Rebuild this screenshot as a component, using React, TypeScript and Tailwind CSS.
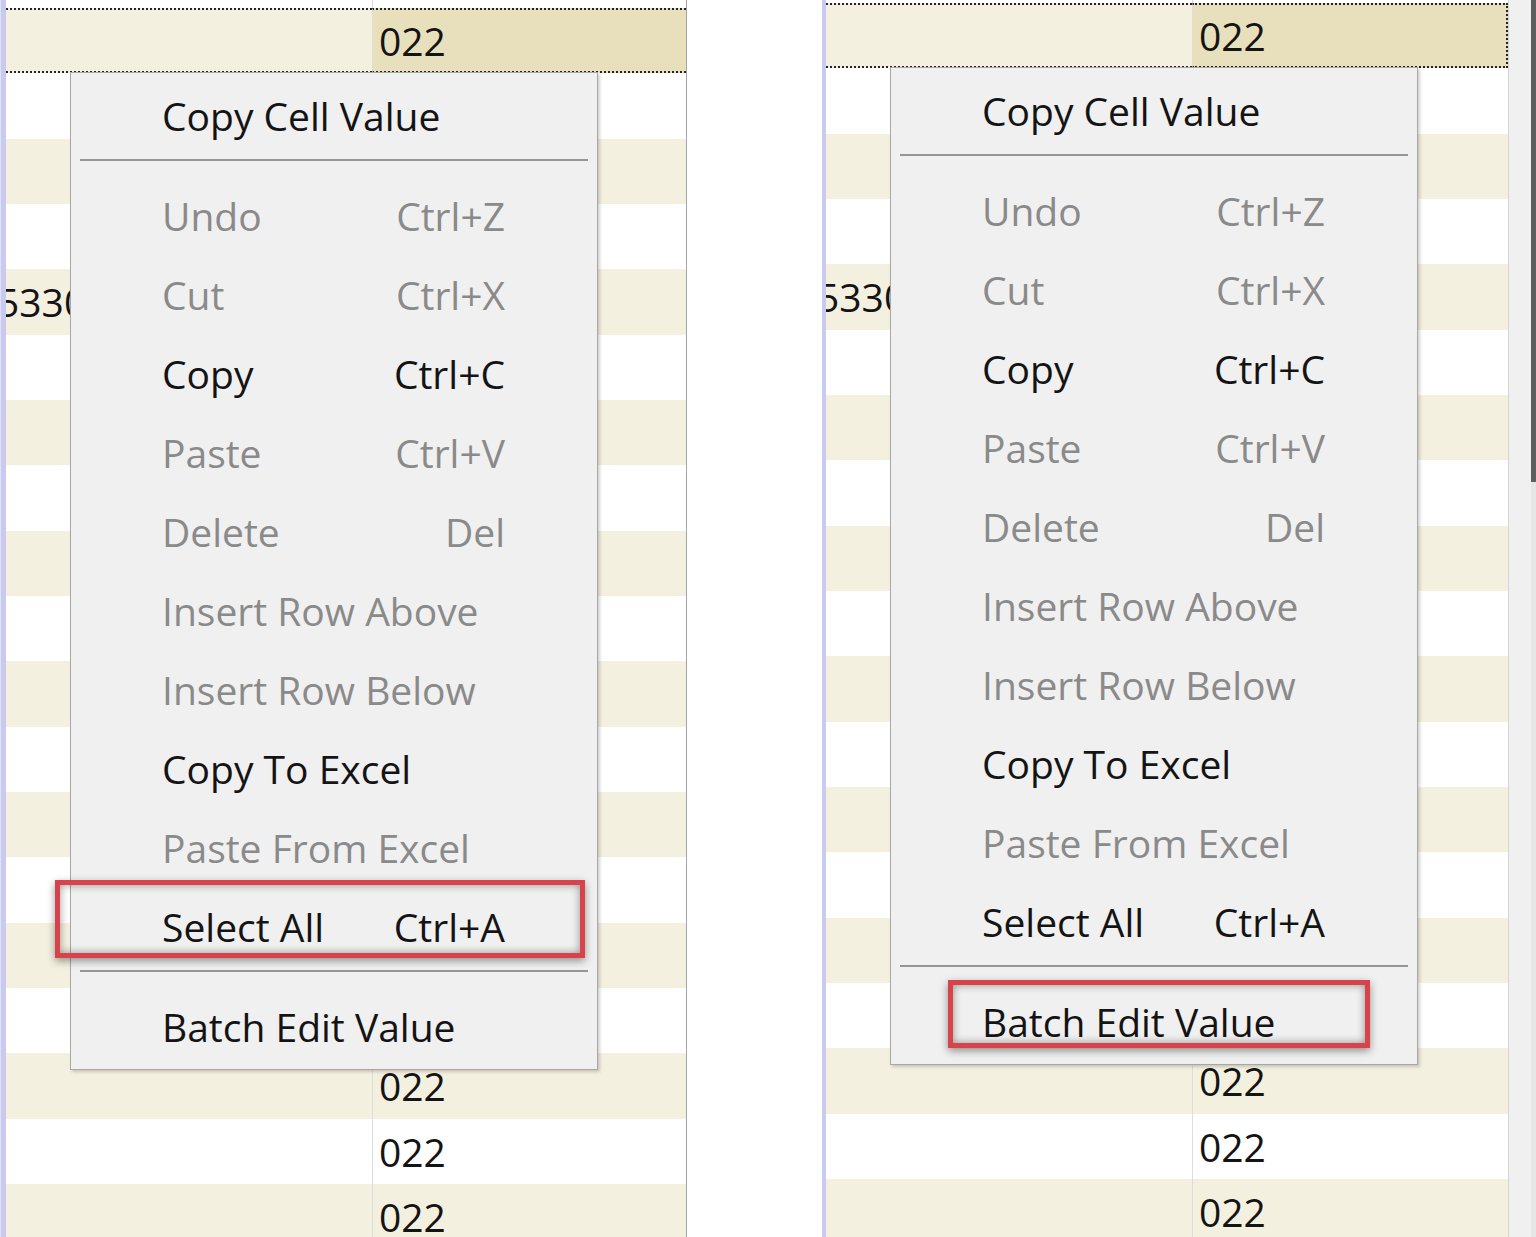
import React from 'react';

type MenuEntry = {
  label?: string;
  shortcut?: string;
  disabled?: boolean;
  separator?: boolean;
};

const menuEntries: MenuEntry[] = [
  { label: 'Copy Cell Value' },
  { separator: true },
  { label: 'Undo', shortcut: 'Ctrl+Z', disabled: true },
  { label: 'Cut', shortcut: 'Ctrl+X', disabled: true },
  { label: 'Copy', shortcut: 'Ctrl+C' },
  { label: 'Paste', shortcut: 'Ctrl+V', disabled: true },
  { label: 'Delete', shortcut: 'Del', disabled: true },
  { label: 'Insert Row Above', disabled: true },
  { label: 'Insert Row Below', disabled: true },
  { label: 'Copy To Excel' },
  { label: 'Paste From Excel', disabled: true },
  { label: 'Select All', shortcut: 'Ctrl+A' },
  { separator: true },
  { label: 'Batch Edit Value' },
];

const ROW_COUNT = 19;
// rows whose value column is not covered by the context menu
const visibleValueRows = [0, 16, 17, 18];

const ContextMenu: React.FC<{ highlight: 'select' | 'batch' }> = ({ highlight }) => {
  return (
    <div className="relative w-[528px] border border-[#a8a8a8] bg-[#f0f0f0] pt-[3px] pb-[3px] shadow-[2px_2px_3px_rgba(0,0,0,0.18)]">
      {menuEntries.map((entry, i) =>
        entry.separator ? (
          <div key={i} className="h-[21px] px-[9px] pt-[4px]">
            <div className="h-[2px] bg-[#959595]" />
          </div>
        ) : (
          <div
            key={i}
            className={`flex h-[79px] items-center justify-between pl-[91px] pr-[92px] ${
              entry.disabled ? 'text-[#8a8a8a]' : 'text-[#141414]'
            }`}
          >
            <span>{entry.label}</span>
            {entry.shortcut && <span>{entry.shortcut}</span>}
          </div>
        )
      )}

      {/* Red annotation box */}
      {highlight === 'select' ? (
        <div className="absolute left-[-16px] top-[807px] h-[78px] w-[530px] border-[5px] border-[#d8424a] shadow-[inset_0_0_9px_rgba(0,0,0,0.4),0_3px_8px_rgba(0,0,0,0.4)]" />
      ) : (
        <div className="absolute left-[57px] top-[912px] h-[68px] w-[422px] border-[5px] border-[#d8424a] shadow-[inset_0_0_9px_rgba(0,0,0,0.4),0_3px_8px_rgba(0,0,0,0.4)]" />
      )}
    </div>
  );
};

const GridRows: React.FC<{ topGap: string; focusRight: boolean }> = ({ topGap, focusRight }) => {
  return (
    <div className="flex w-full flex-col">
      {/* spacer above first row, keeps column divider */}
      <div className={`flex ${topGap}`}>
        <div className="w-[366px] shrink-0" />
        <div className="flex-1 border-l border-[#dcdcdc]" />
      </div>
      {Array.from({ length: ROW_COUNT }).map((_, i) => {
        const cream = i % 2 === 0;
        const selected = i === 0;
        const bg = cream ? 'bg-[#f4f0e0]' : 'bg-white';
        return (
          <div key={i} className="flex h-[65.33px] shrink-0">
            <div
              className={`flex w-[366px] shrink-0 items-center overflow-hidden ${bg} ${
                selected ? 'border-y-2 border-dotted border-[#23232b]' : ''
              }`}
            >
              {i === 4 && <span className="ml-[-9px] whitespace-nowrap">5330</span>}
            </div>
            <div
              className={`flex flex-1 items-center border-l border-[#dcdcdc] pl-[6px] ${
                selected ? 'bg-[#e8e0bd]' : bg
              } ${selected ? 'border-y-2 border-dotted border-y-[#23232b]' : ''} ${
                selected && focusRight ? 'border-r-2 border-r-[#23232b]' : ''
              }`}
            >
              {visibleValueRows.includes(i) ? '022' : ''}
            </div>
          </div>
        );
      })}
    </div>
  );
};

export default function App() {
  return (
    <div
      className="flex h-[1237px] w-[1536px] overflow-hidden bg-white text-[39px] leading-none text-[#141414]"
      style={{ fontFamily: '"Open Sans", "Noto Sans", sans-serif' }}
    >
      {/* Left screenshot */}
      <div className="relative flex h-full w-[688px] shrink-0">
        <div className="w-[1px] bg-[#e2e2f6]" />
        <div className="w-[5px] bg-[#cacaf0]" />
        <div className="w-[680px] overflow-hidden">
          <GridRows topGap="h-[8px]" focusRight={false} />
        </div>
        <div className="w-[1px] bg-[#a4a4a4]" />
        <div className="w-[1px] bg-white" />
        <div className="absolute left-[70px] top-[72px]">
          <ContextMenu highlight="select" />
        </div>
      </div>

      <div className="w-[134px] shrink-0" />

      {/* Right screenshot */}
      <div className="relative flex h-full w-[714px] shrink-0">
        <div className="w-[4px] bg-[#cacaf0]" />
        <div className="w-[682px] overflow-hidden">
          <GridRows topGap="h-[3px]" focusRight={true} />
        </div>
        <div className="w-[1px] bg-[#d4d4d4]" />
        <div className="w-[22px] bg-[#f0f0f0]" />
        <div className="flex w-[5px] flex-col bg-[#e6e6e6]">
          <div className="h-[482px] bg-[#5e5e5e]" />
        </div>
        <div className="absolute left-[68px] top-[67px]">
          <ContextMenu highlight="batch" />
        </div>
      </div>
    </div>
  );
}
